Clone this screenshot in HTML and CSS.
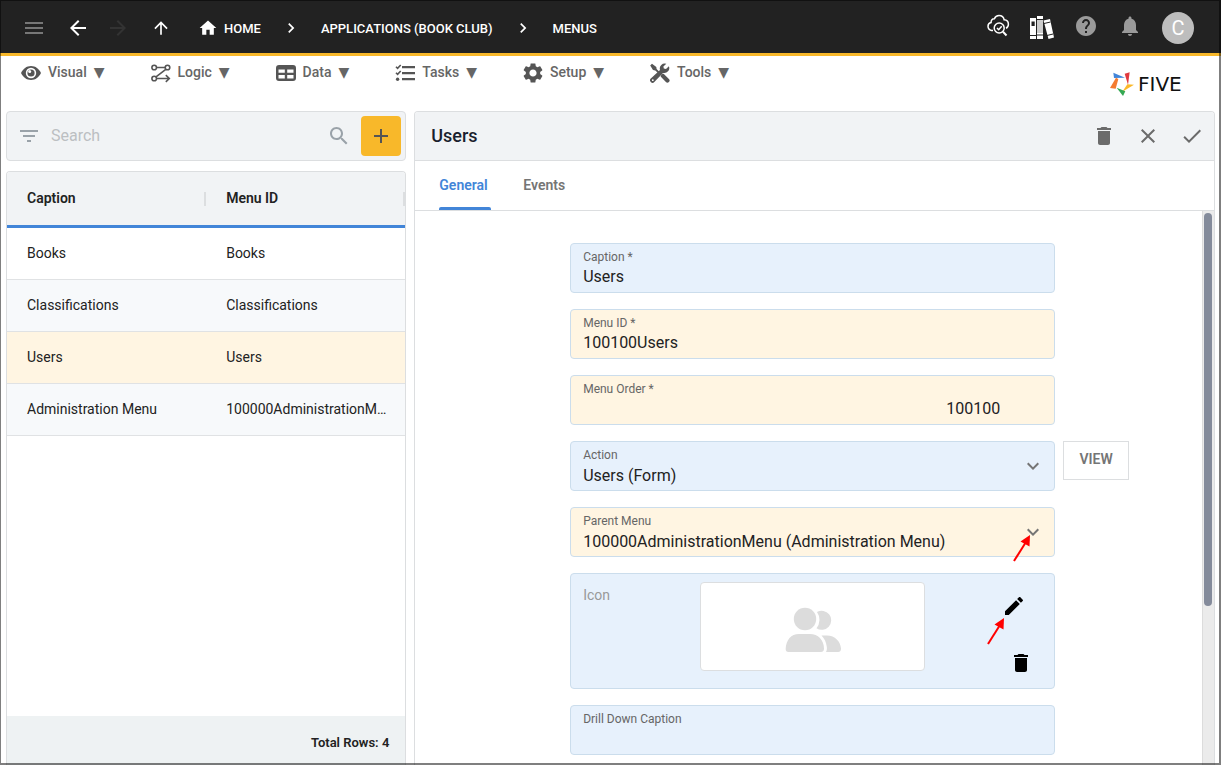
FILE: index.html
```
<!DOCTYPE html>
<html lang="en">
<head>
    <meta charset="UTF-8">
    <meta name="viewport" content="width=device-width, initial-scale=1.0">
    <title>Five - Menus</title>
    <link rel="stylesheet" href="styles.css">
</head>
<body>
    <!-- Shared icons -->
    <svg class="sprite" aria-hidden="true">
        <symbol id="i-trash" viewBox="0 0 24 24"><path d="M6 19c0 1.1.9 2 2 2h8c1.1 0 2-.9 2-2V7H6v12zM19 4h-3.500l-1-1h-5l-1 1H5v2h14V4z"/></symbol>
        <symbol id="i-right" viewBox="0 0 24 24"><path d="M10 6 8.590 7.410 13.170 12l-4.580 4.590L10 18l6-6z"/></symbol>
        <symbol id="i-down" viewBox="0 0 24 24"><path d="M7.410 8.590 12 13.170l4.590-4.580L18 10l-6 6-6-6z"/></symbol>
        <symbol id="i-pointer" viewBox="0 0 18 28"><path d="M1 27 13 8" fill="none" stroke="#f00" stroke-width="2"/><path d="M17 1 7.500 7.500l9 5z" fill="#f00"/></symbol>
    </svg>

    <div class="app">
        <!-- Top Bar -->
        <header class="topbar">
            <button class="nav-btn menu-btn" aria-label="Menu"><svg width="24" height="24" viewBox="0 0 24 24"><path d="M3 18h18v-2H3v2zm0-5h18v-2H3v2zm0-7v2h18V6H3z"/></svg></button>
            <button class="nav-btn" aria-label="Back"><svg width="24" height="24" viewBox="0 0 24 24"><path d="M20 11H7.830l5.590-5.590L12 4l-8 8 8 8 1.410-1.410L7.830 13H20v-2z"/></svg></button>
            <button class="nav-btn forward-btn" aria-label="Forward" disabled><svg width="24" height="24" viewBox="0 0 24 24"><path d="m12 4-1.410 1.410L16.170 11H4v2h12.170l-5.580 5.590L12 20l8-8z"/></svg></button>
            <button class="nav-btn up-btn" aria-label="Up"><svg width="20" height="20" viewBox="0 0 24 24"><path d="m4 12 1.410 1.410L11 7.830V20h2V7.830l5.580 5.590L20 12l-8-8-8 8z"/></svg></button>

            <nav class="breadcrumbs" aria-label="Breadcrumb">
                <a href="#" class="crumb"><svg width="20" height="20" viewBox="0 0 24 24"><path d="M10 20v-6h4v6h5v-8h3L12 3 2 12h3v8z"/></svg>HOME</a>
                <svg width="20" height="20"><use href="#i-right"/></svg>
                <a href="#" class="crumb">APPLICATIONS (BOOK CLUB)</a>
                <svg width="20" height="20"><use href="#i-right"/></svg>
                <a href="#" class="crumb">MENUS</a>
            </nav>

            <div class="top-actions">
                <button class="action-btn" aria-label="Inspect">
                    <svg width="24" height="24" viewBox="0 0 24 24" fill="none" stroke="#fff" stroke-width="1.500">
                        <path d="M7 16.500H5.500C3.500 16 2 14.500 2 12.300c0-2 1.300-3.500 3.100-3.800-.2-2.400 1.300-3.900 3.300-3.700C9.300 2.500 11 1.500 13 1.500c2.800 0 4.700 1.700 5.100 4.200 2.500.2 4.300 2 4.300 4.500 0 1.900-.9 3.300-2.400 4"/>
                        <circle cx="13.200" cy="14" r="5"/>
                        <path d="m11 14 1.700 1.700 3-3.400"/><path d="m17 17.800 3.500 3.700" stroke-width="2"/>
                    </svg>
                </button>
                <button class="action-btn" aria-label="Library">
                    <svg width="26" height="26" viewBox="0 0 26 26" fill="#fff">
                        <path d="M1 5h6v21H1zM8 3h6v23H8zM14.500 7.500l6.500-1.500 4 18.500-5.500 1.500z"/>
                        <path d="M2.500 8.500h3.200V13H2.500z" fill="#222"/>
                        <path d="M8 7h6v13H8z" fill="#ccc"/>
                        <path d="M1 22.500h6M8 6.500h6M8 22h6M15 10.500l6.500-1.500M18 22.500l6-1.500" stroke="#222" stroke-width="1"/>
                    </svg>
                </button>
                <button class="action-btn" aria-label="Help"><svg width="24" height="24" viewBox="0 0 24 24" fill="#9a9a9a"><path d="M12 2C6.480 2 2 6.480 2 12s4.480 10 10 10 10-4.480 10-10S17.520 2 12 2zm1 17h-2v-2h2v2zm2.070-7.750-.9.920C13.450 12.900 13 13.500 13 15h-2v-.5c0-1.100.45-2.100 1.170-2.830l1.240-1.260c.37-.36.59-.86.59-1.410 0-1.100-.9-2-2-2s-2 .9-2 2H8c0-2.210 1.790-4 4-4s4 1.790 4 4c0 .88-.36 1.680-.93 2.250z"/></svg></button>
                <button class="action-btn" aria-label="Notifications"><svg width="24" height="24" viewBox="0 0 24 24" fill="#9a9a9a"><path d="M12 22c1.100 0 2-.9 2-2h-4c0 1.100.89 2 2 2zm6-6v-5c0-3.070-1.640-5.640-4.500-6.320V4c0-.83-.67-1.500-1.500-1.500s-1.500.67-1.500 1.500v.68C7.630 5.360 6 7.920 6 11v5l-2 2v1h16v-1l-2-2z"/></svg></button>
            </div>
            <button class="avatar">C</button>
        </header>

        <!-- Main Menu -->
        <div class="menubar">
            <nav class="main-menu">
                <button class="menu-item">
                    <svg width="20" height="20" viewBox="0 0 20 20"><path d="M0 10C2 5.800 5.500 3 10 3s8 2.800 10 7c-2 4.200-5.500 7-10 7s-8-2.800-10-7z"/><circle cx="10" cy="10" r="5.200" fill="#fff"/><circle cx="10" cy="10" r="3.600"/><circle cx="8.700" cy="8.600" r="1.500" fill="#fff"/></svg>
                    <span>Visual</span><span class="caret">▼</span>
                </button>
                <button class="menu-item">
                    <svg width="20" height="20" viewBox="0 0 20 20" fill="none" stroke="#555" stroke-width="1.600"><circle cx="3.200" cy="4.500" r="2.300"/><circle cx="16.500" cy="4.500" r="2.300"/><circle cx="3.200" cy="15.500" r="2.300"/><path d="M5.500 4.500h8.700M14.800 6.300 5 13.800M5.500 15.500H18M14.800 12.200l3.500 3.300-3.500 3.300"/></svg>
                    <span>Logic</span><span class="caret">▼</span>
                </button>
                <button class="menu-item">
                    <svg width="20" height="20" viewBox="0 0 20 20"><path fill-rule="evenodd" d="M3 2h14a3 3 0 0 1 3 3v10a3 3 0 0 1-3 3H3a3 3 0 0 1-3-3V5a3 3 0 0 1 3-3zM2.500 6.500v3.200h6.300V6.500zm8.700 0v3.200h6.300V6.500zM2.500 12v3.500h6.300V12zm8.700 0v3.500h6.300V12z"/></svg>
                    <span>Data</span><span class="caret">▼</span>
                </button>
                <button class="menu-item">
                    <svg width="20" height="20" viewBox="0 0 20 20"><path d="M7 3h13v2.200H7zM7 9h13v2.200H7zM7 15h13v2.200H7z"/><path d="m1 3.700 1.600 1.600L5.700 2M1 9.700l1.600 1.600L5.700 8" fill="none" stroke="#555" stroke-width="1.600"/><circle cx="2.600" cy="16.300" r="1.700"/></svg>
                    <span>Tasks</span><span class="caret">▼</span>
                </button>
                <button class="menu-item">
                    <svg width="20" height="20" viewBox="2 2 20 20"><path d="M19.140 12.940c.04-.3.060-.61.060-.94 0-.32-.02-.64-.07-.94l2.030-1.580c.18-.14.23-.41.120-.61l-1.920-3.320c-.12-.22-.37-.29-.59-.22l-2.390.96c-.5-.38-1.030-.7-1.620-.94L14.400 2.810c-.04-.24-.24-.41-.48-.41h-3.840c-.24 0-.43.17-.47.41L9.250 5.350C8.660 5.590 8.120 5.920 7.630 6.290L5.240 5.330c-.22-.08-.47 0-.59.22L2.740 8.870c-.12.21-.08.47.12.61l2.030 1.580c-.05.3-.09.63-.09.94s.02.64.07.94l-2.030 1.580c-.18.14-.23.41-.12.61l1.920 3.320c.12.22.37.29.59.22l2.390-.96c.5.38 1.030.7 1.620.94l.36 2.540c.05.24.24.41.48.41h3.840c.24 0 .44-.17.47-.41l.36-2.540c.59-.24 1.130-.56 1.620-.94l2.390.96c.22.08.47 0 .59-.22l1.920-3.320c.12-.22.07-.47-.12-.61l-2.010-1.580zM12 15.600c-1.980 0-3.600-1.620-3.600-3.600s1.620-3.600 3.600-3.600 3.600 1.620 3.600 3.600-1.620 3.600-3.600 3.600z"/></svg>
                    <span>Setup</span><span class="caret">▼</span>
                </button>
                <button class="menu-item">
                    <svg width="20" height="20" viewBox="0 0 20 20"><path d="M2 .8 6.300 4l.3 2.100 3.700 3.700L9 11.100 5.300 7.400 3 7 .2 2.600z"/><path d="m11.500 11.200 2.100-.5 5.300 5.200a2.100 2.100 0 0 1-3 3l-5.300-5.300z"/><path d="M18.900 3.200 16 6l-2.200-.4L13.400 3.500l2.900-2.800a5 5 0 0 0-6.300 6.200L.8 15.500a2.400 2.400 0 0 0 3.500 3.500L13 9.900a5 5 0 0 0 5.900-6.700z"/><circle cx="2.800" cy="17.200" r=".9" fill="#fff"/></svg>
                    <span>Tools</span><span class="caret">▼</span>
                </button>
            </nav>
            <div class="logo">
                <svg width="24" height="24" viewBox="0 0 72 72"><path d="M10 2 45 17 12 18z" fill="#4285d8"/><path d="m44 5 15-4-5 37z" fill="#e0393e"/><path d="m52 37 20 1-35 21z" fill="#fbb829"/><path d="m20 47 26 11-7 14z" fill="#34a853"/><path d="m18 17 7 4-8 29-17-2z" fill="#f47b30"/></svg>
                <span class="wordmark">FIVE</span>
            </div>
        </div>

        <main class="content">
            <!-- Record List -->
            <section class="list-side">
                <div class="search-bar">
                    <svg width="24" height="24" viewBox="0 0 24 24"><path d="M10 18h4v-2h-4v2zM3 6v2h18V6H3zm3 7h12v-2H6v2z"/></svg>
                    <input type="search" class="search-input" placeholder="Search" aria-label="Search">
                    <svg width="24" height="24" viewBox="0 0 24 24"><path d="M15.500 14h-.79l-.28-.27C15.410 12.590 16 11.110 16 9.500 16 5.910 13.090 3 9.500 3S3 5.910 3 9.500 5.910 16 9.500 16c1.610 0 3.090-.59 4.230-1.570l.27.28v.79l5 4.990L20.490 19l-4.990-5zm-6 0C7.010 14 5 11.990 5 9.500S7.010 5 9.500 5 14 7.010 14 9.500 11.990 14 9.500 14z"/></svg>
                    <button class="add-btn" aria-label="Add"><svg width="24" height="24" viewBox="0 0 24 24"><path d="M19 13h-6v6h-2v-6H5v-2h6V5h2v6h6v2z"/></svg></button>
                </div>

                <div class="list-panel">
                    <table class="records">
                        <thead>
                            <tr><th>Caption</th><th>Menu ID</th></tr>
                        </thead>
                        <tbody>
                            <tr><td>Books</td><td>Books</td></tr>
                            <tr><td>Classifications</td><td>Classifications</td></tr>
                            <tr class="selected"><td>Users</td><td>Users</td></tr>
                            <tr><td>Administration Menu</td><td>100000AdministrationMenu</td></tr>
                        </tbody>
                    </table>
                    <div class="list-footer">Total Rows: 4</div>
                </div>
            </section>

            <!-- Record Form -->
            <section class="form-panel">
                <div class="form-header">
                    <h1>Users</h1>
                    <button class="icon-btn" aria-label="Delete"><svg width="24" height="24"><use href="#i-trash"/></svg></button>
                    <button class="icon-btn" aria-label="Cancel"><svg width="24" height="24" viewBox="0 0 24 24"><path d="M19 6.410 17.590 5 12 10.590 6.410 5 5 6.410 10.590 12 5 17.590 6.410 19 12 13.410 17.590 19 19 17.590 13.410 12z"/></svg></button>
                    <button class="icon-btn" aria-label="Save"><svg width="24" height="24" viewBox="0 0 24 24"><path d="M9 16.170 4.830 12l-1.420 1.410L9 19 21 7l-1.410-1.410z"/></svg></button>
                </div>

                <div class="tabs" role="tablist">
                    <button class="tab active" role="tab" aria-selected="true">General</button>
                    <button class="tab" role="tab" aria-selected="false">Events</button>
                </div>

                <div class="form-body">
                    <form class="fields">
                        <div class="field">
                            <label for="caption">Caption *</label>
                            <input type="text" id="caption" value="Users">
                        </div>
                        <div class="field changed">
                            <label for="menuId">Menu ID *</label>
                            <input type="text" id="menuId" value="100100Users">
                        </div>
                        <div class="field changed">
                            <label for="menuOrder">Menu Order *</label>
                            <input type="text" id="menuOrder" class="number" value="100100">
                        </div>
                        <div class="field">
                            <label for="action">Action</label>
                            <select id="action"><option>Users (Form)</option></select>
                            <svg class="arrow" width="24" height="24"><use href="#i-down"/></svg>
                        </div>
                        <button type="button" class="view-btn">VIEW</button>
                        <div class="field changed">
                            <label for="parentMenu">Parent Menu</label>
                            <select id="parentMenu"><option>100000AdministrationMenu (Administration Menu)</option></select>
                            <svg class="arrow" width="24" height="24"><use href="#i-down"/></svg>
                            <svg class="pointer pointer-select" width="18" height="28"><use href="#i-pointer"/></svg>
                        </div>
                        <div class="field icon-field">
                            <span class="icon-label">Icon</span>
                            <div class="preview">
                                <svg width="56" height="46" viewBox="0 0 56 46" fill="#dcdcdc"><circle cx="20" cy="12" r="11.200"/><path d="M32 5a9.500 9.500 0 1 1-.5 16.200A13.500 13.500 0 0 0 32 5zM14 27h11c8 0 14 6 14 14.500 0 2-1 3.500-3 3.500H3.500c-2 0-3-1.500-2.800-3.500C1.200 33 6 27 14 27zM36.500 28.500H42c8 0 13.500 6 14 13 .1 2-1 3.500-2.800 3.500H41c1-1.800 1-3.200.8-5-.6-4.800-2.300-8.500-5.300-11.500z"/></svg>
                            </div>
                            <div class="icon-actions">
                                <button type="button" class="edit-btn" aria-label="Edit icon"><svg width="24" height="24" viewBox="0 0 24 24"><path d="M3 17.250V21h3.750L17.810 9.940l-3.750-3.750L3 17.250zM20.710 7.040c.39-.39.39-1.020 0-1.410l-2.340-2.340c-.39-.39-1.020-.39-1.410 0l-1.830 1.830 3.750 3.750 1.830-1.830z"/></svg></button>
                                <button type="button" class="remove-btn" aria-label="Remove icon"><svg width="24" height="24"><use href="#i-trash"/></svg></button>
                            </div>
                            <svg class="pointer pointer-edit" width="18" height="28"><use href="#i-pointer"/></svg>
                        </div>
                        <div class="field">
                            <label for="drillDown">Drill Down Caption</label>
                            <input type="text" id="drillDown" value="">
                        </div>
                    </form>
                    <div class="scrollbar"><div class="thumb"></div></div>
                </div>
            </section>
        </main>
    </div>
</body>
</html>
```
FILE: styles.css
```
* {
    margin: 0;
    padding: 0;
    box-sizing: border-box;
}

body {
    font-family: Roboto, 'Open Sans', sans-serif;
    font-size: 14px;
    color: #222;
    background: #fff;
    overflow: hidden;
}

button,
input,
select {
    font: inherit;
    color: inherit;
    background: none;
    border: none;
    outline: none;
}

button {
    display: flex;
    align-items: center;
    justify-content: center;
    cursor: pointer;
}

svg {
    display: block;
    flex: none;
}

svg:not([fill]) {
    fill: currentColor;
}

.sprite {
    position: absolute;
    width: 0;
    height: 0;
}

.app {
    display: flex;
    flex-direction: column;
    height: 100vh;
}

/* Window frame */
.app::after {
    content: '';
    position: fixed;
    inset: 0;
    border: 1px solid rgba(0, 0, 0, 0.5);
    border-right-width: 2px;
    border-bottom-width: 2px;
    pointer-events: none;
}

/* Top Bar */
.topbar {
    display: flex;
    align-items: center;
    height: 56px;
    padding: 3px 27px 0 14px;
    background: #222;
    border-bottom: 3px solid #f8b82a;
    color: #fff;
}

.nav-btn {
    width: 40px;
    height: 40px;
}

.menu-btn {
    margin-right: 4px;
    color: #777;
}

.forward-btn {
    color: #333;
}

.up-btn {
    margin-left: 3px;
}

.breadcrumbs {
    display: flex;
    align-items: center;
    gap: 20px;
    margin-left: 17px;
    font-size: 13px;
    font-weight: 500;
}

.crumb {
    display: flex;
    align-items: center;
    gap: 6px;
    color: #fff;
    text-decoration: none;
}

.top-actions {
    display: flex;
    margin-left: auto;
    margin-right: 10px;
}

.action-btn {
    width: 44px;
    height: 40px;
    padding-bottom: 4px;
}

.avatar {
    width: 32px;
    height: 32px;
    border-radius: 50%;
    background: #bdbdbd;
    font-size: 20px;
}

/* Main Menu */
.menubar {
    display: flex;
    justify-content: space-between;
    align-items: center;
    height: 55px;
    padding: 0 23px 0 21px;
}

.main-menu {
    display: flex;
    align-self: flex-start;
    gap: 46px;
}

.menu-item {
    gap: 7px;
    height: 33px;
    font-weight: 500;
    color: #666;
}

.menu-item span {
    padding-bottom: 2px;
}

.menu-item .caret {
    font-family: 'DejaVu Sans', sans-serif;
    font-size: 14px;
    font-weight: 400;
}

.menu-item svg {
    color: #555;
}

.logo {
    display: flex;
    align-items: center;
    gap: 4px;
}

.wordmark {
    width: 60px;
    font-family: 'DejaVu Sans', sans-serif;
    font-size: 20px;
    line-height: 24px;
    color: #111;
}

/* Content */
.content {
    flex: 1;
    display: grid;
    grid-template-columns: 1fr 2fr;
    gap: 8px;
    min-height: 0;
    padding: 0 6px;
}

.list-side {
    display: flex;
    flex-direction: column;
    gap: 10px;
    min-width: 0;
}

.search-bar {
    display: flex;
    align-items: center;
    height: 50px;
    padding: 0 4px 0 10px;
    background: #f1f3f5;
    border: 1px solid #dcdee0;
    border-radius: 4px;
    color: #9aa2a9;
}

.search-input {
    flex: 1;
    min-width: 0;
    padding: 0 10px 2px;
    font-size: 16px;
}

.search-input::placeholder {
    color: #bcbfc2;
}

.add-btn {
    width: 40px;
    height: 40px;
    margin-left: 10px;
    border-radius: 4px;
    background: #f8b82a;
    color: #555;
}

/* Record List */
.list-panel {
    flex: 1;
    display: flex;
    flex-direction: column;
    justify-content: space-between;
    border: 1px solid #dcdee0;
    border-bottom: none;
    border-radius: 4px 4px 0 0;
    overflow: hidden;
}

.records {
    width: 100%;
    table-layout: fixed;
    border-spacing: 0;
    text-align: left;
}

.records th {
    height: 56px;
    padding: 0 16px 2px 20px;
    border-bottom: 3px solid #4285d8;
    background: linear-gradient(#dcdee0, #dcdee0) right center / 2px 14px no-repeat #f1f3f5;
    font-weight: 600;
}

.records td {
    height: 52px;
    padding: 0 12px 2px 20px;
    border-bottom: 1px solid #e0e2e4;
    overflow: hidden;
    text-overflow: ellipsis;
    white-space: nowrap;
}

.records tbody tr:nth-child(even) {
    background: #f7f9fb;
}

.records tbody .selected {
    background: #fff5e2;
}

.list-footer {
    height: 49px;
    padding: 4px 16px 0;
    background: #eef2f3;
    font-size: 13px;
    font-weight: 600;
    line-height: 45px;
    text-align: right;
}

/* Record Form */
.form-panel {
    display: flex;
    flex-direction: column;
    min-width: 0;
    border: 1px solid #dcdee0;
    border-bottom: none;
    border-radius: 4px 4px 0 0;
    overflow: hidden;
}

.form-header {
    display: flex;
    align-items: center;
    flex: none;
    height: 49px;
    padding-left: 16px;
    background: #f1f3f5;
    border-bottom: 1px solid #dcdee0;
}

.form-header h1 {
    flex: 1;
    padding-bottom: 2px;
    font-size: 18px;
    font-weight: 500;
    color: #1a1f2e;
}

.icon-btn {
    width: 44px;
    height: 44px;
    color: #6b6b6b;
}

.tabs {
    display: flex;
    flex: none;
    gap: 32px;
    height: 50px;
    padding: 0 24px;
    border-bottom: 1px solid #dcdee0;
}

.tab {
    position: relative;
    min-width: 52px;
    padding-bottom: 2px;
    justify-content: flex-start;
    font-weight: 600;
    color: #757575;
}

.tab.active {
    color: #4285d8;
}

.tab.active::after {
    content: '';
    position: absolute;
    left: 0;
    right: 0;
    bottom: 0;
    height: 3px;
    border-radius: 2px 2px 0 0;
    background: #4285d8;
}

.form-body {
    flex: 1;
    display: flex;
    min-height: 0;
}

.fields {
    flex: 1;
    display: grid;
    grid-template-columns: 1fr minmax(0, 485px) 1fr;
    align-content: start;
    gap: 16px 8px;
    padding: 32px 0 0 8px;
}

.field {
    position: relative;
    grid-column: 2;
    display: flex;
    flex-direction: column;
    padding: 5px 12px 3px;
    background: #e7f1fc;
    border: 1px solid #cbddec;
    border-radius: 4px;
}

.field.changed {
    background: #fff5e2;
}

.field label {
    font-size: 12px;
    line-height: 16px;
    color: #666;
}

.field input,
.field select {
    width: 100%;
    height: 24px;
    font-size: 16px;
    line-height: 22px;
    appearance: none;
}

.field input {
    padding-bottom: 2px;
}

.field select {
    padding-top: 2px;
}

.field .number {
    padding-right: 42px;
    text-align: right;
}

.arrow {
    position: absolute;
    top: 12px;
    right: 9px;
    color: #757575;
    pointer-events: none;
}

.view-btn {
    grid-column: 3;
    justify-self: start;
    width: 66px;
    height: 39px;
    padding-bottom: 3px;
    border: 1px solid #dcdee0;
    font-weight: 600;
    color: #757575;
}

.icon-field {
    flex-direction: row;
    height: 116px;
    padding: 8px 21px 4px 12px;
}

.icon-label {
    width: 117px;
    padding-top: 5px;
    line-height: 16px;
    color: #999;
}

.preview {
    display: flex;
    align-items: center;
    justify-content: center;
    width: 225px;
    height: 89px;
    padding-top: 6px;
    background: #fff;
    border: 1px solid #dcdee0;
    border-radius: 4px;
}

.icon-actions {
    flex: 1;
    display: flex;
    flex-direction: column;
    align-items: flex-end;
    gap: 20px;
    padding-top: 6px;
    color: #000;
}

.edit-btn {
    width: 38px;
    height: 36px;
}

.remove-btn {
    width: 24px;
    height: 38px;
}

/* Pointers on the controls to use */
.pointer {
    position: absolute;
    pointer-events: none;
}

.pointer-select {
    top: 26px;
    right: 23px;
}

.pointer-edit {
    top: 43px;
    right: 49px;
}

/* Scrollbar */
.scrollbar {
    width: 12px;
    padding: 2px 2px 0 1px;
    background: #ebebeb;
    border-left: 1px solid #dcdcdc;
}

.thumb {
    height: 393px;
    border-radius: 4px;
    background: #848b9b;
}
```
